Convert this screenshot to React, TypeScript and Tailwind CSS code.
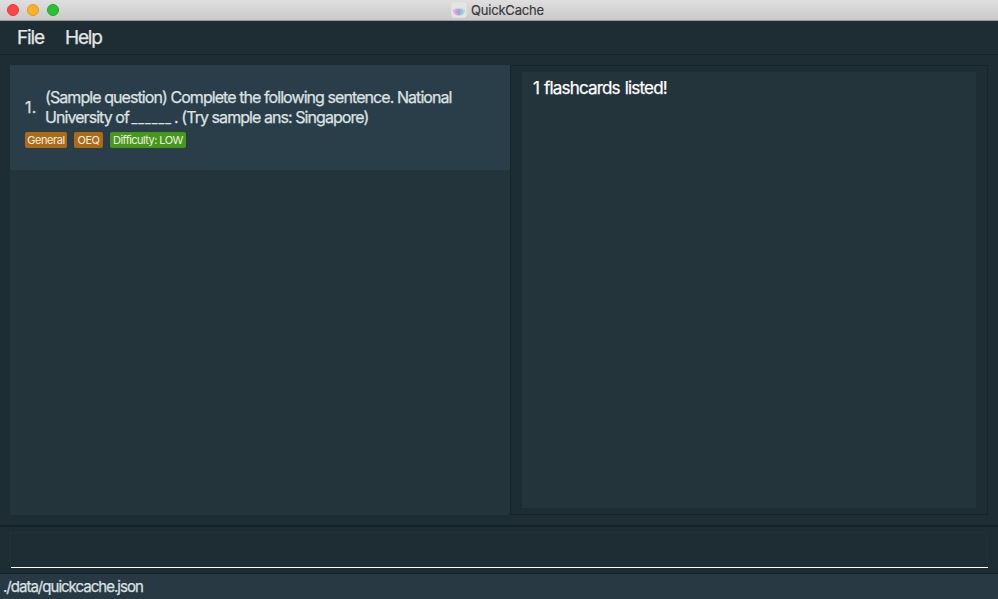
import React from "react";

function TitleBar() {
  return (
    <header className="relative flex h-[21px] shrink-0 items-center justify-center border-b border-[#9b9b9b] bg-linear-to-b from-[#dfdfdf] to-[#cacaca]">
      <div className="absolute left-[7px] top-1 flex gap-2">
        <span className="size-3 rounded-full border border-[#e0383c] bg-[#fc4548]" />
        <span className="size-3 rounded-full border border-[#df9a1c] bg-[#fdb024]" />
        <span className="size-3 rounded-full border border-[#1fa62b] bg-[#29c231]" />
      </div>
      <div className="flex w-[96px] items-center gap-1">
        <svg className="shrink-0" width="16" height="16" viewBox="0 0 16 16">
          <rect x="0.3" y="0.3" width="15.4" height="15.4" rx="3.2" fill="#e4e4e6" />
          <path d="M2 7.6Q4 7 5 8.4L8 13.4Q2.4 14 2 7.6Z" fill="#e5a8cf" />
          <path d="M14 7.6Q12 7 11 8.4L8 13.4Q13.6 14 14 7.6Z" fill="#8fe0cf" />
          <path d="M4.4 6.2Q7.4 6.4 8 8.4V13.4Q4 12.6 4.4 6.2Z" fill="#cf9bd6" />
          <path d="M11.6 6.2Q8.6 6.4 8 8.4V13.4Q12 12.6 11.6 6.2Z" fill="#92c3df" />
          <path d="M8 5.4Q10.6 9.6 8 13.4Q5.4 9.6 8 5.4Z" fill="#aaa0dc" />
        </svg>
        <span className="text-[13px] leading-4 tracking-[-0.2px] text-[#363636] [-webkit-text-stroke:0.15px_#363636]">QuickCache</span>
      </div>
    </header>
  );
}

function Tag({ children, className }: { children: React.ReactNode; className: string }) {
  return (
    <span className={`flex h-4 items-center justify-center whitespace-nowrap rounded-[2px] text-[11px] text-[#f0f0e8] ${className}`}>
      {children}
    </span>
  );
}

export default function App() {
  return (
    <div className="flex h-[599px] w-[998px] flex-col overflow-hidden bg-[#1e2d34] font-['Inter',sans-serif]">
      <TitleBar />
      <nav className="flex h-[34px] shrink-0 items-center border-b border-[#15242b] pl-[17px] pt-[2px] text-[19px] text-[#e3e6e7] [-webkit-text-stroke:0.25px_#e3e6e7]">
        <span className="w-[48px] tracking-[-1.1px]">File</span>
        <span className="tracking-[-1.2px]">Help</span>
      </nav>
      <main className="flex h-[470px] shrink-0 px-[10px] py-[10px]">
        <section className="w-[500px] bg-[#23343b]">
          <article className="h-[105px] bg-[#2a3e49] pl-[15px] pt-[22px] text-[#dde2e4]">
            <div className="flex items-center text-[16px] leading-5 [-webkit-text-stroke:0.25px_#dde2e4]">
              <span className="w-5 tracking-[0.2px]">1.</span>
              <div className="whitespace-nowrap">
                <div className="h-5 tracking-[-0.93px]">(Sample question) Complete the following sentence. National</div>
                <div className="h-5 tracking-[-0.94px]">
                  University of <span className="-ml-px mr-[-1.5px] text-[12.5px] leading-none tracking-[1.05px]">______</span> . (Try sample ans: Singapore)
                </div>
              </div>
            </div>
            <div className="mt-[5px] flex gap-[7px]">
              <Tag className="w-[42px] bg-[#ad6a14] tracking-[-0.45px]">General</Tag>
              <Tag className="w-[29px] bg-[#ad6a14] tracking-[-0.4px]">OEQ</Tag>
              <Tag className="w-[76px] bg-[#46981b] tracking-[-0.55px]">Difficulty: LOW</Tag>
            </div>
          </article>
        </section>
        <section className="w-[478px] border border-[#15242b] pb-[6px] pl-[11px] pr-[11px] pt-[6px]">
          <div className="h-full bg-[#23343b] pl-[11px] pt-[6px] text-[17px] leading-5 tracking-[-0.82px] text-white [-webkit-text-stroke:0.25px_white] [word-spacing:1px]">
            1 flashcards listed!
          </div>
        </section>
      </main>
      <section className="h-[49px] shrink-0 border-b border-t-2 border-[#15242b] px-[10px] pt-[5px]">
        <div className="h-9 border border-b-0 border-[#22323a]">
          <div className="-mr-px h-[35px] border-b border-white" />
        </div>
      </section>
      <footer className="flex-1 rounded-b-[5px] border-b border-[#485761] bg-[#283944] pl-[3px] text-[15px] leading-[26px] tracking-[-0.98px] text-[#dce1e4] [-webkit-text-stroke:0.25px_#dce1e4]">
        ./data/quickcache.json
      </footer>
    </div>
  );
}
